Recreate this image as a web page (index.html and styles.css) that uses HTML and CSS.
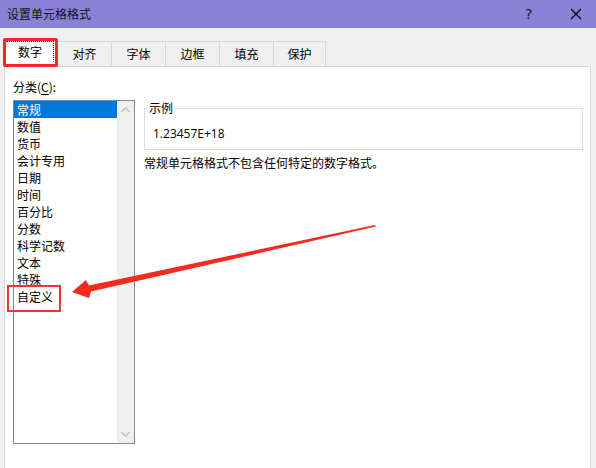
FILE: index.html
```html
<!DOCTYPE html>
<html lang="zh-CN">
<head>
<meta charset="utf-8">
<title>设置单元格格式</title>
<link rel="stylesheet" href="styles.css">
</head>
<body>
<div class="window">
  <div class="titlebar">
    <span class="title">设置单元格格式</span>
    <span class="help">?</span>
    <span class="close">
      <svg width="12" height="12" viewBox="0 0 12 12"><path d="M1 1 L11 11 M11 1 L1 11" stroke="#000" stroke-width="1.1" fill="none"/></svg>
    </span>
  </div>
  <div class="body">
    <div class="tabs">
      <div class="tab active"><span class="focus">数字</span></div>
      <div class="tab first">对齐</div>
      <div class="tab">字体</div>
      <div class="tab">边框</div>
      <div class="tab">填充</div>
      <div class="tab last">保护</div>
    </div>
    <div class="panel">
      <div class="label">分类(<u>C</u>):</div>
      <div class="listbox">
        <ul class="items">
          <li class="sel">常规</li>
          <li>数值</li>
          <li>货币</li>
          <li>会计专用</li>
          <li>日期</li>
          <li>时间</li>
          <li>百分比</li>
          <li>分数</li>
          <li>科学记数</li>
          <li>文本</li>
          <li>特殊</li>
          <li>自定义</li>
        </ul>
        <div class="scrollbar">
          <svg width="9" height="6" viewBox="0 0 9 6"><path d="M0.5 5 L4.5 1 L8.5 5" stroke="#c2c2c2" stroke-width="1.6" fill="none"/></svg>
          <svg width="9" height="6" viewBox="0 0 9 6"><path d="M0.5 1 L4.5 5 L8.5 1" stroke="#c2c2c2" stroke-width="1.6" fill="none"/></svg>
        </div>
      </div>
      <div class="right">
        <fieldset class="sample">
          <legend>示例</legend>
          <div class="value">1.23457E+18</div>
        </fieldset>
        <p class="desc">常规单元格格式不包含任何特定的数字格式。</p>
      </div>
    </div>
  </div>
  <div class="mark-box"></div>
  <svg class="arrow" width="596" height="468" viewBox="0 0 596 468">
    <polygon points="72,292 86,280 89,285.5 375,225 375.8,226.6 91,291.5 89,298" fill="#f52a1e"/>
  </svg>
</div>
</body>
</html>
```
FILE: styles.css
```css
* { box-sizing: border-box; }
html, body {
  margin: 0;
  padding: 0;
}
body {
  width: 596px;
  height: 468px;
  overflow: hidden;
  font-family: "Noto Sans CJK SC", "Noto Sans", sans-serif;
  font-size: 12px;
  color: #000;
  background: #f0f0f0;
}
.window {
  position: relative;
  width: 596px;
  height: 468px;
  display: flex;
  flex-direction: column;
}
.titlebar {
  height: 28px;
  flex: none;
  background: #8a80d6;
  display: flex;
  align-items: center;
  padding-left: 7px;
}
.title {
  flex: 1;
  line-height: 16px;
  color: #111;
}
.help {
  width: 12px;
  font-family: "DejaVu Sans", sans-serif;
  font-size: 14px;
  line-height: 16px;
  color: #1a1a2a;
  margin-right: 33px;
}
.close {
  display: flex;
  width: 12px;
  margin-right: 14px;
}
.body {
  flex: 1;
  display: flex;
  flex-direction: column;
  padding: 10px 5px 0 3px;
  min-height: 0;
}
.tabs {
  display: flex;
  align-items: flex-end;
  height: 28px;
  flex: none;
}
.tab {
  width: 54px;
  height: 25px;
  border-top: 1px solid #d9d9d9;
  border-right: 1px solid #d9d9d9;
  background: #f0f0f0;
  display: flex;
  align-items: center;
  justify-content: center;
  line-height: 16px;
}
.tab.last { width: 52px; }
.tab.active {
  width: 55px;
  height: 29px;
  margin-bottom: -1px;
  background: #fff;
  border: 3px solid #ee2a2a;
  border-radius: 2px;
  position: relative;
  z-index: 2;
  padding: 0 1px 2px 0;
}
.focus {
  flex: 1;
  align-self: stretch;
  display: flex;
  align-items: center;
  justify-content: center;
  border: 1px dotted #000;
  border-left-color: transparent;
  border-bottom-color: transparent;
}
.panel {
  flex: 1;
  margin-left: 1px;
  background: #fff;
  border: 1px solid #d9d9d9;
  border-bottom: none;
  display: grid;
  grid-template-columns: 122px 1fr;
  grid-template-rows: auto auto;
  column-gap: 9px;
  align-content: start;
  padding: 12px 7px 0 8px;
}
.label {
  grid-column: 1 / 3;
  line-height: 16px;
  margin-bottom: 5px;
}
.label u { text-decoration: underline; text-underline-offset: 2px; }
.listbox {
  height: 344px;
  border: 1px solid #828790;
  display: flex;
}
.items {
  list-style: none;
  margin: 0;
  padding: 0;
  flex: 1;
}
.items li {
  height: 17px;
  line-height: 17px;
  padding-left: 3px;
  white-space: nowrap;
}
.items li.sel {
  background: #0078d7;
  color: #fff;
}
.scrollbar {
  width: 17px;
  background: #f0f0f0;
  display: flex;
  flex-direction: column;
  justify-content: space-between;
  align-items: center;
  padding: 6px 0 6px;
}
.right {
  display: flex;
  flex-direction: column;
}
.sample {
  margin: 0;
  border: 1px solid #dcdcdc;
  padding: 10px 8px 7px;
  min-width: 0;
}
.sample legend {
  padding: 0 2px;
  margin-left: -6px;
  line-height: 16px;
}
.value {
  line-height: 16px;
  padding-left: 0;
  font-family: "Open Sans", "Noto Sans", sans-serif;
}
.desc {
  margin: 5px 0 0;
  line-height: 16px;
}
.mark-box {
  position: absolute;
  left: 7px;
  top: 285px;
  width: 54px;
  height: 27px;
  border: 2px solid #ee3535;
}
.arrow {
  position: absolute;
  left: 0;
  top: 0;
  pointer-events: none;
}
```
